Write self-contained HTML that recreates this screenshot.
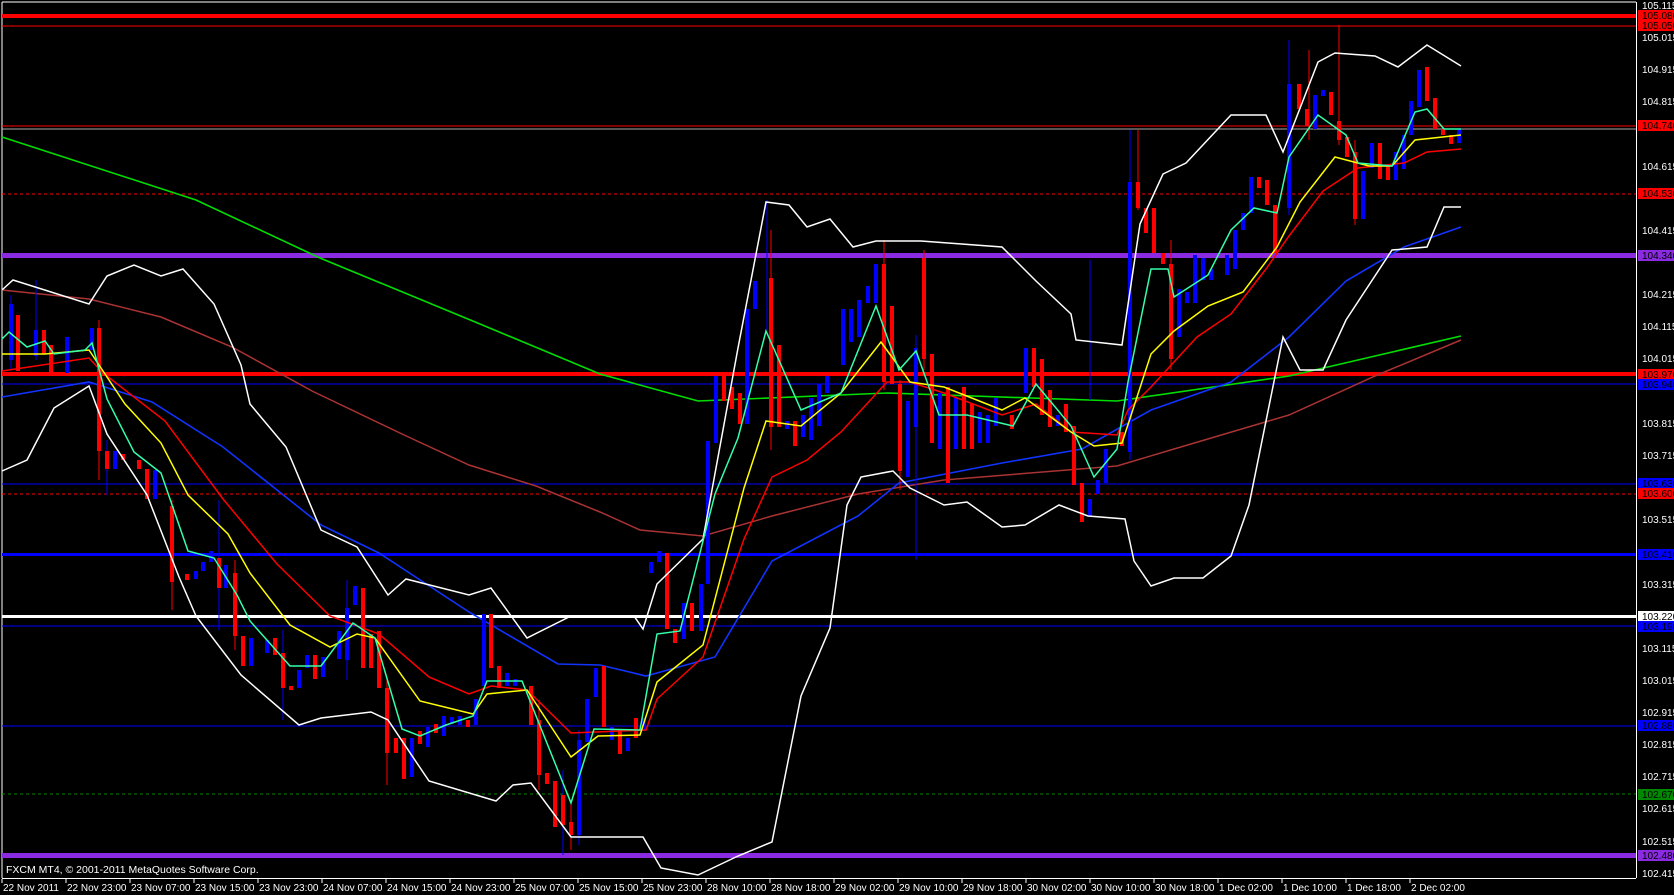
<!DOCTYPE html>
<html><head><meta charset="utf-8"><style>
body{margin:0;background:#000;width:1674px;height:895px;overflow:hidden;font-family:"Liberation Sans",sans-serif}
svg{display:block}
text{font-family:"Liberation Sans",sans-serif;font-size:10px}
</style></head><body>
<svg width="1674" height="895" xmlns="http://www.w3.org/2000/svg">
<rect width="1674" height="895" fill="#000"/>
<line x1="2" y1="2" x2="1636" y2="2" stroke="#fff"/>
<line x1="2" y1="2" x2="2" y2="878" stroke="#fff"/>
<line x1="1636.5" y1="2" x2="1636.5" y2="878" stroke="#fff"/>
<line x1="2" y1="878.5" x2="1636" y2="878.5" stroke="#fff"/>
<g>
<rect x="2" y="14" width="1634" height="4" fill="#f00"/>
<line x1="2" y1="26" x2="1636" y2="26" stroke="#f00"/>
<line x1="2" y1="126" x2="1636" y2="126" stroke="#f00"/>
<line x1="2" y1="129" x2="1636" y2="129" stroke="#aaa"/>
<line x1="2" y1="194" x2="1636" y2="194" stroke="#f00" stroke-dasharray="3,3"/>
<rect x="2" y="253" width="1634" height="5" fill="#8a2be2"/>
<rect x="2" y="372" width="1634" height="4" fill="#f00"/>
<line x1="2" y1="384" x2="1636" y2="384" stroke="#00f"/>
<line x1="2" y1="484" x2="1636" y2="484" stroke="#00f"/>
<line x1="2" y1="494" x2="1636" y2="494" stroke="#f00" stroke-dasharray="3,3"/>
<rect x="2" y="553" width="1634" height="3" fill="#00f"/>
<rect x="2" y="615" width="1634" height="3" fill="#fff"/>
<line x1="2" y1="626" x2="1636" y2="626" stroke="#00f"/>
<line x1="2" y1="726" x2="1636" y2="726" stroke="#00f"/>
<line x1="2" y1="794" x2="1636" y2="794" stroke="#080" stroke-dasharray="3,3"/>
<rect x="2" y="853" width="1634" height="5" fill="#8a2be2"/>
</g>
<polyline fill="none" stroke="#0d0" stroke-width="1.6" points="2,137 196,200 320,258 480,324 600,374 698,401 887,393 1117,401 1289,376 1461,336"/>
<polyline fill="none" stroke="#a33" stroke-width="1.5" points="2,290 89,299 161,317 232,347 312,391 402,434 469,465 536,486 600,512 640,530 703,536 772,516 858,494 944,480 1117,466 1174,449 1289,415 1375,376 1461,340"/>
<polyline fill="none" stroke="#13f" stroke-width="1.6" points="2,397 89,382 152,402 223,447 321,525 379,553 469,612 558,664 600,665 646,676 715,657 772,561 858,516 899,483 1002,463 1082,449 1151,410 1231,382 1289,337 1346,281 1404,247 1461,227"/>
<g stroke-width="1" stroke="#00f">
<line x1="11" y1="295" x2="11" y2="370"/><line x1="36" y1="280" x2="36" y2="360"/><line x1="107" y1="440" x2="107" y2="495"/><line x1="219" y1="500" x2="219" y2="630"/><line x1="283" y1="630" x2="283" y2="720"/><line x1="347" y1="580" x2="347" y2="680"/><line x1="563" y1="770" x2="563" y2="855"/><line x1="579" y1="730" x2="579" y2="845"/><line x1="767" y1="200" x2="767" y2="330"/><line x1="1130" y1="130" x2="1130" y2="460"/><line x1="1289" y1="40" x2="1289" y2="215"/><line x1="916" y1="335" x2="916" y2="560"/><line x1="1090" y1="260" x2="1090" y2="400"/>
</g>
<g stroke-width="1" stroke="#f00">
<line x1="99" y1="320" x2="99" y2="480"/><line x1="172" y1="500" x2="172" y2="610"/><line x1="235" y1="560" x2="235" y2="650"/><line x1="387" y1="680" x2="387" y2="785"/><line x1="539" y1="700" x2="539" y2="790"/><line x1="571" y1="800" x2="571" y2="850"/><line x1="771" y1="230" x2="771" y2="450"/><line x1="884" y1="240" x2="884" y2="390"/><line x1="900" y1="380" x2="900" y2="490"/><line x1="924" y1="250" x2="924" y2="370"/><line x1="1138" y1="130" x2="1138" y2="210"/><line x1="1309" y1="50" x2="1309" y2="140"/><line x1="1339" y1="25" x2="1339" y2="145"/><line x1="1355" y1="140" x2="1355" y2="225"/><line x1="1171" y1="240" x2="1171" y2="370"/>
</g>
<g fill="#00f">
<rect x="9" y="304" width="4" height="56"/><rect x="34" y="330" width="4" height="26"/><rect x="65" y="337" width="4" height="36"/><rect x="90" y="328" width="4" height="22"/><rect x="113" y="451" width="4" height="18"/><rect x="153" y="470" width="4" height="29"/><rect x="194" y="571" width="4" height="8"/><rect x="201" y="562" width="4" height="9"/><rect x="209" y="551" width="4" height="11"/><rect x="224" y="565" width="4" height="23"/><rect x="249" y="638" width="4" height="28"/><rect x="265" y="640" width="4" height="13"/><rect x="297" y="670" width="4" height="18"/><rect x="305" y="655" width="4" height="13"/><rect x="321" y="657" width="4" height="20"/><rect x="337" y="631" width="4" height="28"/><rect x="345" y="608" width="4" height="52"/><rect x="353" y="586" width="4" height="19"/><rect x="410" y="738" width="4" height="39"/><rect x="426" y="727" width="4" height="20"/><rect x="442" y="716" width="4" height="20"/><rect x="450" y="717" width="4" height="7"/><rect x="458" y="716" width="4" height="9"/><rect x="474" y="699" width="4" height="26"/><rect x="482" y="614" width="4" height="72"/><rect x="505" y="673" width="4" height="13"/><rect x="513" y="679" width="4" height="7"/><rect x="577" y="740" width="4" height="95"/><rect x="585" y="699" width="4" height="43"/><rect x="594" y="668" width="4" height="29"/><rect x="610" y="727" width="4" height="13"/><rect x="626" y="738" width="4" height="13"/><rect x="642" y="718" width="4" height="13"/><rect x="649" y="562" width="4" height="11"/><rect x="657" y="551" width="4" height="11"/><rect x="682" y="603" width="4" height="36"/><rect x="699" y="584" width="4" height="47"/><rect x="706" y="441" width="4" height="143"/><rect x="714" y="376" width="4" height="67"/><rect x="745" y="309" width="4" height="115"/><rect x="753" y="281" width="4" height="28"/><rect x="785" y="421" width="4" height="8"/><rect x="801" y="415" width="4" height="22"/><rect x="809" y="398" width="4" height="42"/><rect x="817" y="384" width="4" height="42"/><rect x="825" y="376" width="4" height="17"/><rect x="841" y="309" width="4" height="56"/><rect x="849" y="309" width="4" height="33"/><rect x="857" y="300" width="4" height="37"/><rect x="866" y="286" width="4" height="17"/><rect x="874" y="264" width="4" height="39"/><rect x="906" y="401" width="4" height="76"/><rect x="914" y="348" width="4" height="79"/><rect x="938" y="393" width="4" height="56"/><rect x="954" y="398" width="4" height="51"/><rect x="978" y="412" width="4" height="31"/><rect x="986" y="415" width="4" height="28"/><rect x="994" y="398" width="4" height="28"/><rect x="1024" y="348" width="4" height="45"/><rect x="1056" y="415" width="4" height="11"/><rect x="1088" y="499" width="4" height="17"/><rect x="1096" y="480" width="4" height="14"/><rect x="1104" y="449" width="4" height="34"/><rect x="1128" y="182" width="4" height="270"/><rect x="1177" y="289" width="4" height="48"/><rect x="1185" y="292" width="4" height="11"/><rect x="1193" y="255" width="4" height="48"/><rect x="1201" y="258" width="4" height="22"/><rect x="1209" y="269" width="4" height="11"/><rect x="1225" y="255" width="4" height="20"/><rect x="1233" y="230" width="4" height="39"/><rect x="1241" y="213" width="4" height="17"/><rect x="1249" y="177" width="4" height="36"/><rect x="1287" y="84" width="4" height="124"/><rect x="1313" y="95" width="4" height="34"/><rect x="1321" y="90" width="4" height="6"/><rect x="1361" y="171" width="4" height="48"/><rect x="1370" y="143" width="4" height="25"/><rect x="1394" y="152" width="4" height="28"/><rect x="1402" y="135" width="4" height="34"/><rect x="1409" y="101" width="4" height="34"/><rect x="1417" y="70" width="4" height="37"/><rect x="1457" y="129" width="4" height="14"/>
</g>
<g fill="#f00">
<rect x="16" y="315" width="4" height="56"/><rect x="42" y="330" width="4" height="24"/><rect x="49" y="345" width="4" height="31"/><rect x="97" y="328" width="4" height="123"/><rect x="105" y="451" width="4" height="18"/><rect x="121" y="454" width="4" height="6"/><rect x="137" y="460" width="4" height="9"/><rect x="145" y="469" width="4" height="30"/><rect x="170" y="506" width="4" height="76"/><rect x="185" y="574" width="4" height="6"/><rect x="217" y="558" width="4" height="30"/><rect x="233" y="573" width="4" height="63"/><rect x="241" y="636" width="4" height="30"/><rect x="273" y="638" width="4" height="17"/><rect x="281" y="653" width="4" height="35"/><rect x="289" y="686" width="4" height="4"/><rect x="313" y="655" width="4" height="24"/><rect x="361" y="588" width="4" height="80"/><rect x="369" y="634" width="4" height="34"/><rect x="377" y="631" width="4" height="57"/><rect x="385" y="688" width="4" height="65"/><rect x="394" y="738" width="4" height="15"/><rect x="402" y="738" width="4" height="41"/><rect x="418" y="731" width="4" height="13"/><rect x="434" y="724" width="4" height="9"/><rect x="466" y="720" width="4" height="7"/><rect x="489" y="614" width="4" height="54"/><rect x="497" y="666" width="4" height="22"/><rect x="529" y="686" width="4" height="39"/><rect x="537" y="720" width="4" height="55"/><rect x="545" y="773" width="4" height="11"/><rect x="553" y="781" width="4" height="46"/><rect x="561" y="795" width="4" height="30"/><rect x="569" y="822" width="4" height="13"/><rect x="602" y="666" width="4" height="61"/><rect x="618" y="730" width="4" height="24"/><rect x="634" y="718" width="4" height="20"/><rect x="665" y="553" width="4" height="76"/><rect x="673" y="629" width="4" height="14"/><rect x="690" y="603" width="4" height="28"/><rect x="722" y="373" width="4" height="28"/><rect x="730" y="387" width="4" height="22"/><rect x="738" y="393" width="4" height="31"/><rect x="769" y="278" width="4" height="149"/><rect x="777" y="345" width="4" height="82"/><rect x="793" y="421" width="4" height="25"/><rect x="882" y="264" width="4" height="118"/><rect x="890" y="306" width="4" height="78"/><rect x="898" y="384" width="4" height="87"/><rect x="922" y="258" width="4" height="101"/><rect x="930" y="354" width="4" height="89"/><rect x="946" y="387" width="4" height="96"/><rect x="962" y="387" width="4" height="62"/><rect x="970" y="404" width="4" height="45"/><rect x="1010" y="415" width="4" height="14"/><rect x="1032" y="348" width="4" height="39"/><rect x="1040" y="359" width="4" height="56"/><rect x="1048" y="390" width="4" height="37"/><rect x="1064" y="404" width="4" height="28"/><rect x="1072" y="426" width="4" height="59"/><rect x="1080" y="483" width="4" height="39"/><rect x="1120" y="432" width="4" height="14"/><rect x="1136" y="182" width="4" height="26"/><rect x="1144" y="208" width="4" height="25"/><rect x="1152" y="208" width="4" height="45"/><rect x="1161" y="253" width="4" height="11"/><rect x="1169" y="264" width="4" height="95"/><rect x="1257" y="177" width="4" height="11"/><rect x="1265" y="180" width="4" height="25"/><rect x="1273" y="205" width="4" height="48"/><rect x="1297" y="84" width="4" height="25"/><rect x="1305" y="109" width="4" height="17"/><rect x="1329" y="92" width="4" height="23"/><rect x="1337" y="121" width="4" height="19"/><rect x="1345" y="137" width="4" height="20"/><rect x="1353" y="152" width="4" height="67"/><rect x="1378" y="143" width="4" height="36"/><rect x="1386" y="166" width="4" height="14"/><rect x="1425" y="67" width="4" height="34"/><rect x="1433" y="98" width="4" height="31"/><rect x="1441" y="129" width="4" height="6"/><rect x="1449" y="135" width="4" height="9"/>
</g>
<polyline fill="none" stroke="#fff" stroke-width="1.5" points="2,290 13,280 89,304 107,276 134,265 161,276 183,269 214,304 241,365 250,404 286,447 321,530 357,547 388,595 406,579 469,595 491,588 527,638 571,616 634,616 643,629 657,584 703,539 738,348 766,202 789,205 807,227 830,219 853,247 876,241 921,241 1002,247 1036,281 1071,314 1076,340 1122,345 1140,224 1163,174 1186,163 1231,115 1266,115 1283,152 1318,62 1335,53 1375,56 1398,67 1427,45 1461,66"/>
<polyline fill="none" stroke="#fff" stroke-width="1.5" points="2,471 27,460 54,408 89,386 107,434 147,495 179,577 196,616 241,675 299,725 321,718 371,712 388,720 429,781 496,801 513,785 531,783 571,837 643,837 661,868 698,875 738,856 772,842 801,696 830,628 847,505 861,477 893,471 910,488 944,505 967,502 1002,527 1025,525 1059,505 1088,516 1125,519 1134,561 1151,586 1174,578 1203,578 1231,556 1249,505 1283,337 1300,370 1323,370 1346,320 1392,250 1427,247 1444,207 1461,207"/>
<polyline fill="none" stroke="#f00" stroke-width="1.5" points="2,371 89,358 103,373 165,421 223,499 277,564 330,616 379,634 429,677 469,694 491,686 527,690 571,733 646,730 657,699 703,657 744,539 772,477 807,460 841,432 887,382 910,382 944,393 1002,415 1036,404 1071,432 1117,435 1128,410 1151,387 1197,337 1231,314 1266,269 1289,236 1323,191 1358,168 1404,163 1427,152 1461,149"/>
<polyline fill="none" stroke="#ff0" stroke-width="1.5" points="2,354 45,354 89,350 125,404 161,443 188,495 228,534 250,573 290,625 330,647 357,634 375,638 420,701 473,714 487,694 527,690 571,757 598,736 640,735 657,682 703,645 744,488 766,421 801,426 841,393 881,342 910,382 944,387 1002,410 1025,398 1071,432 1094,446 1122,443 1151,354 1174,331 1208,306 1243,292 1277,247 1300,202 1335,157 1369,166 1392,166 1415,140 1461,135"/>
<polyline fill="none" stroke="#3fa" stroke-width="1.5" points="2,339 9,332 27,347 45,341 54,354 85,350 92,343 107,399 134,452 161,473 188,551 214,558 237,595 250,621 290,666 321,666 353,623 375,638 402,729 420,736 446,725 473,716 487,681 522,681 571,803 594,729 640,730 657,634 680,631 715,494 738,438 766,331 801,410 841,393 876,306 899,370 916,351 939,415 967,415 1013,426 1036,384 1071,426 1094,477 1117,449 1128,382 1151,269 1168,269 1174,297 1208,275 1231,230 1254,208 1277,213 1289,157 1318,115 1346,135 1358,163 1392,166 1415,112 1427,109 1444,129 1461,129"/>
<text x="6" y="873" fill="#fff" style="font-size:10.5px">FXCM MT4, © 2001-2011 MetaQuotes Software Corp.</text>
<g fill="#fff">
<text x="1642" y="9">105.115</text><text x="1642" y="41">105.015</text><text x="1642" y="73">104.915</text><text x="1642" y="105">104.815</text><text x="1642" y="170">104.615</text><text x="1642" y="234">104.415</text><text x="1642" y="298">104.215</text><text x="1642" y="330">104.115</text><text x="1642" y="362">104.015</text><text x="1642" y="427">103.815</text><text x="1642" y="459">103.715</text><text x="1642" y="523">103.515</text><text x="1642" y="588">103.315</text><text x="1642" y="652">103.115</text><text x="1642" y="684">103.015</text><text x="1642" y="716">102.915</text><text x="1642" y="748">102.815</text><text x="1642" y="780">102.715</text><text x="1642" y="812">102.615</text><text x="1642" y="845">102.515</text><text x="1642" y="877">102.415</text>
</g>
<g>
<rect x="1638" y="10" width="36" height="11" fill="#f00"/><text x="1642" y="19" fill="#000">105.080</text>
<rect x="1638" y="20" width="36" height="11" fill="#f00"/><text x="1642" y="29" fill="#000">105.050</text>
<rect x="1638" y="120" width="36" height="11" fill="#f00"/><text x="1642" y="129" fill="#000">104.740</text>
<rect x="1638" y="188" width="36" height="11" fill="#f00"/><text x="1642" y="197" fill="#000">104.530</text>
<rect x="1638" y="250" width="36" height="11" fill="#8a2be2"/><text x="1642" y="259" fill="#000">104.340</text>
<rect x="1638" y="369" width="36" height="11" fill="#f00"/><text x="1642" y="378" fill="#000">103.970</text>
<rect x="1638" y="379" width="36" height="11" fill="#00f"/><text x="1642" y="388" fill="#000">103.940</text>
<rect x="1638" y="478" width="36" height="11" fill="#00f"/><text x="1642" y="487" fill="#000">103.630</text>
<rect x="1638" y="488" width="36" height="11" fill="#f00"/><text x="1642" y="497" fill="#000">103.600</text>
<rect x="1638" y="549" width="36" height="11" fill="#00f"/><text x="1642" y="558" fill="#000">103.410</text>
<rect x="1638" y="611" width="36" height="11" fill="#fff"/><text x="1642" y="620" fill="#000">103.220</text>
<rect x="1638" y="621" width="36" height="11" fill="#00f"/><text x="1642" y="630" fill="#000">103.190</text>
<rect x="1638" y="720" width="36" height="11" fill="#00f"/><text x="1642" y="729" fill="#000">102.880</text>
<rect x="1638" y="789" width="36" height="11" fill="#080"/><text x="1642" y="798" fill="#000">102.670</text>
<rect x="1638" y="850" width="36" height="11" fill="#8a2be2"/><text x="1642" y="859" fill="#000">102.480</text>
</g>
<g fill="#fff">
<text x="3" y="891">22 Nov 2011</text><text x="67" y="891">22 Nov 23:00</text><text x="131" y="891">23 Nov 07:00</text><text x="195" y="891">23 Nov 15:00</text><text x="259" y="891">23 Nov 23:00</text><text x="323" y="891">24 Nov 07:00</text><text x="387" y="891">24 Nov 15:00</text><text x="451" y="891">24 Nov 23:00</text><text x="515" y="891">25 Nov 07:00</text><text x="579" y="891">25 Nov 15:00</text><text x="643" y="891">25 Nov 23:00</text><text x="707" y="891">28 Nov 10:00</text><text x="771" y="891">28 Nov 18:00</text><text x="835" y="891">29 Nov 02:00</text><text x="899" y="891">29 Nov 10:00</text><text x="963" y="891">29 Nov 18:00</text><text x="1027" y="891">30 Nov 02:00</text><text x="1091" y="891">30 Nov 10:00</text><text x="1155" y="891">30 Nov 18:00</text><text x="1219" y="891">1 Dec 02:00</text><text x="1283" y="891">1 Dec 10:00</text><text x="1347" y="891">1 Dec 18:00</text><text x="1411" y="891">2 Dec 02:00</text>
</g>
<g stroke="#fff">
<line x1="2" y1="879" x2="2" y2="883"/><line x1="66" y1="879" x2="66" y2="883"/><line x1="130" y1="879" x2="130" y2="883"/><line x1="194" y1="879" x2="194" y2="883"/><line x1="258" y1="879" x2="258" y2="883"/><line x1="322" y1="879" x2="322" y2="883"/><line x1="386" y1="879" x2="386" y2="883"/><line x1="450" y1="879" x2="450" y2="883"/><line x1="514" y1="879" x2="514" y2="883"/><line x1="578" y1="879" x2="578" y2="883"/><line x1="642" y1="879" x2="642" y2="883"/><line x1="706" y1="879" x2="706" y2="883"/><line x1="770" y1="879" x2="770" y2="883"/><line x1="834" y1="879" x2="834" y2="883"/><line x1="898" y1="879" x2="898" y2="883"/><line x1="962" y1="879" x2="962" y2="883"/><line x1="1026" y1="879" x2="1026" y2="883"/><line x1="1090" y1="879" x2="1090" y2="883"/><line x1="1154" y1="879" x2="1154" y2="883"/><line x1="1218" y1="879" x2="1218" y2="883"/><line x1="1282" y1="879" x2="1282" y2="883"/><line x1="1346" y1="879" x2="1346" y2="883"/><line x1="1410" y1="879" x2="1410" y2="883"/>
</g>
</svg>
</body></html>
